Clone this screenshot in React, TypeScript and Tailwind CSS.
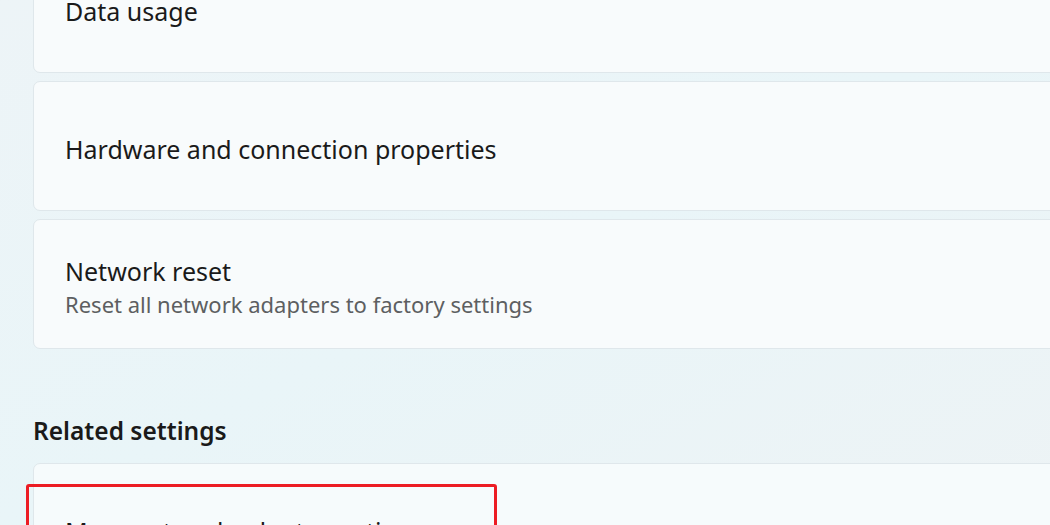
const cards = [
  { title: "Data usage" },
  { title: "Hardware and connection properties" },
  { title: "Network reset", sub: "Reset all network adapters to factory settings" },
];

function Card({ title, sub }: { title: string; sub?: string }) {
  return (
    <div className="h-[130px] rounded-[7px] border border-[#dfe7eb] bg-[#f8fbfc] pl-[31px] pt-[5px] flex flex-col justify-center">
      <div className="text-[25px] leading-[34px] text-[#1a1a1a]">{title}</div>
      {sub && <div className="text-[22px] leading-[32px] text-[#5d5f61]">{sub}</div>}
    </div>
  );
}

export default function App() {
  return (
    <div
      className="h-[525px] w-[1050px] overflow-hidden bg-gradient-to-br from-[#edf4f7] via-[#e9f5f8] to-[#edf3f5]"
      style={{ fontFamily: '"Noto Sans", "Open Sans", sans-serif' }}
    >
      <div className="ml-[33px] mt-[-57px] w-[1100px] flex flex-col gap-[8px]">
        {cards.map((c) => (
          <Card key={c.title} title={c.title} sub={c.sub} />
        ))}
      </div>
      <div className="ml-[33px] mt-[65px] text-[24.5px] leading-[34px] font-semibold text-[#1a1a1a]">
        Related settings
      </div>
      <div className="relative ml-[33px] mt-[15px] w-[1100px]">
        <div className="h-[130px] rounded-[7px] border border-[#dfe7eb] bg-[#f6fbfc] pl-[31px] pt-[5px] flex items-center">
          <div className="text-[25px] leading-[34px] text-[#1a1a1a]">More network adapter options</div>
        </div>
        <div className="absolute left-[-7px] top-[21px] h-[200px] w-[471px] rounded-[3px] border-[3px] border-[#ec1c24]" />
      </div>
    </div>
  );
}
